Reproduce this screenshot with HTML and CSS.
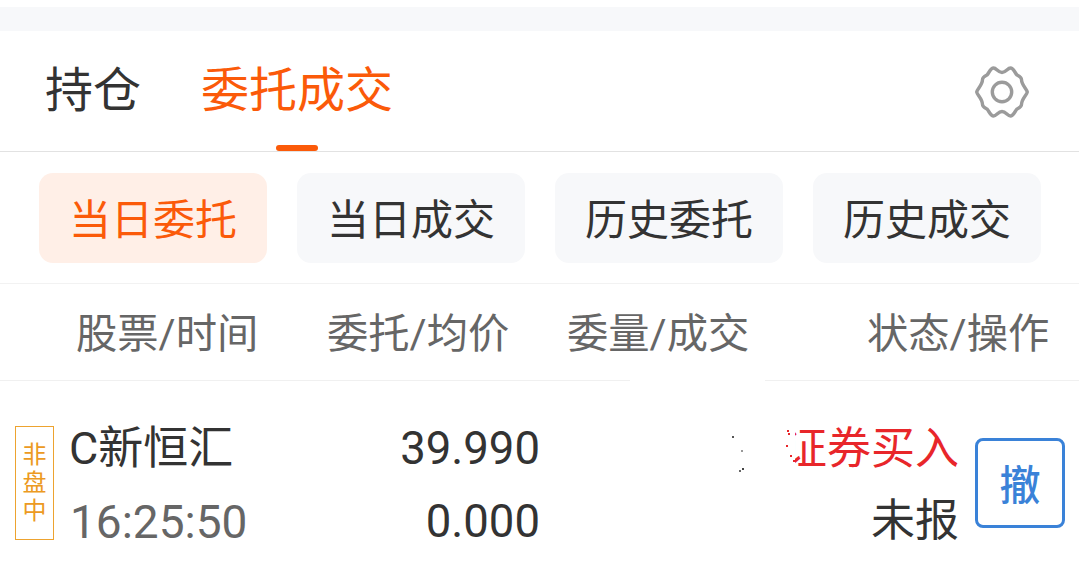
FILE: index.html
```html
<!DOCTYPE html>
<html lang="zh-CN">
<head>
<meta charset="utf-8">
<title>委托成交</title>
<link rel="stylesheet" href="styles.css">
</head>
<body>
<div class="band"></div>
<nav class="tabs">
  <span class="tab">持仓</span>
  <span class="tab tab-active">委托成交</span>
  <svg class="gear" viewBox="0 0 56 56" fill="none" stroke="#9b9b9b" stroke-width="3.4" stroke-linejoin="round">
    <path d="M53.300 28C52.800 25 47.500 21 47.500 15.500C47.500 13 45 12 43 11C41 9 39.500 4 36.500 4C33.500 4 32 8.500 28 8.500C24 8.500 22.500 4 19.500 4C16.500 4 15 9 13 11C11 12 8.500 13 8.500 15.500C8.500 21 3.200 25 2.700 28C3.200 31 8.500 35 8.500 40.500C8.500 43 11 44 13 45C15 47 16.500 52 19.500 52C22.500 52 24 47.500 28 47.500C32 47.500 33.500 52 36.500 52C39.500 52 41 47 43 45C45 44 47.500 43 47.500 40.500C47.500 35 52.800 31 53.300 28Z"/>
    <circle cx="28" cy="28" r="9.700"/>
  </svg>
</nav>
<div class="filters">
  <span class="chip chip-active">当日委托</span>
  <span class="chip">当日成交</span>
  <span class="chip">历史委托</span>
  <span class="chip">历史成交</span>
</div>
<div class="thead">
  <span>股票/时间</span>
  <span>委托/均价</span>
  <span>委量/成交</span>
  <span>状态/操作</span>
</div>
<div class="row">
  <div class="tag">非<br>盘<br>中</div>
  <div class="name">
    <div class="name-top">C新恒汇</div>
    <div class="name-time">16:25:50</div>
  </div>
  <div class="price">
    <div>39.990</div>
    <div>0.000</div>
  </div>
  <div class="status">
    <div class="status-top">证券买入<i class="erase"></i></div>
    <div class="status-bottom">未报</div>
  </div>
  <div class="cancel">撤</div>
  <i class="erase-line"></i>
  <i class="specks"></i>
</div>
</body>
</html>
```
FILE: styles.css
```css
* { box-sizing: border-box; }
html, body { margin: 0; padding: 0; background: #fff; }
body {
  width: 1079px;
  height: 575px;
  overflow: hidden;
  padding-top: 7px;
  font-family: Roboto, "Noto Sans CJK SC", sans-serif;
  color: #333;
}
.band { height: 24px; background: #f7f8fa; }
.tabs {
  position: relative;
  height: 121px;
  display: flex;
  align-items: center;
  padding: 0 49px 0 45px;
  border-bottom: 1px solid #e2e2e2;
  font-size: 48px;
}
.tab { line-height: 60px; margin-right: 60px; }
.tab-active { color: #fb5a09; position: relative; }
.tab-active::after {
  content: "";
  position: absolute;
  left: 75px;
  bottom: -30px;
  width: 42px;
  height: 6px;
  border-radius: 3px;
  background: #fb5a09;
}
.gear { width: 56px; height: 56px; margin-left: auto; margin-top: 2px; }
.filters {
  display: flex;
  gap: 30px;
  padding: 21px 0 20px 39px;
  border-bottom: 1px solid #f2f2f2;
}
.chip {
  width: 228px;
  height: 90px;
  display: flex;
  align-items: center;
  justify-content: center;
  padding-bottom: 3px;
  border-radius: 14px;
  background: #f7f8fa;
  font-size: 42px;
}
.chip-active { background: #ffefe7; color: #fb5a09; }
.thead {
  display: grid;
  grid-template-columns: 251px 240px 300px auto;
  padding: 0 0 5px 76px;
  height: 97px;
  align-items: center;
  border-bottom: 1px solid #f0f0f0;
  font-size: 41.300px;
  color: #666;
}
.row {
  position: relative;
  display: flex;
  align-items: flex-start;
  padding: 45px 14px 0 15px;
}
.tag {
  width: 39px;
  height: 114px;
  border: 1px solid #eda32f;
  color: #ec9a22;
  font-size: 24px;
  line-height: 28px;
  text-align: center;
  padding-top: 14px;
}
.name { margin-left: 16px; width: 300px; margin-top: -7px; }
.name-top { font-size: 45px; line-height: 60px; margin-left: -1px; }
.name-time { font-size: 46px; line-height: 60px; margin-top: 13px; color: #666; }
.price {
  width: 170px;
  margin-top: -7px;
  font-size: 45.500px;
  line-height: 60px;
  text-align: right;
}
.price div + div { margin-top: 13px; }
.status {
  margin-left: auto;
  margin-top: -7px;
  text-align: right;
  font-size: 44px;
  line-height: 60px;
}
.status-top { position: relative; color: #e8262a; }
.status-bottom { margin-top: 12px; }
.erase {
  position: absolute;
  left: -2px;
  top: 8px;
  width: 14px;
  height: 46px;
  background: #fff;
  box-shadow: -2px 0 0 #fff;
}
.erase-line {
  position: absolute;
  left: 630px;
  top: -1px;
  width: 135px;
  height: 1px;
  background: #fff;
}
.specks {
  position: absolute;
  left: 732px;
  top: 55px;
  width: 2px;
  height: 2px;
  background: #555;
  box-shadow:
    9px 14px 0 #999,
    10px 32px 0 #444,
    7px 34px 0 #666,
    55px -6px 0 #e8262a,
    56px -3px 0 #e8262a,
    54px 9px 0 #e8262a,
    58px 19px 0 #e8262a,
    61px 24px 0 #e8262a;
}
.cancel {
  width: 90px;
  height: 90px;
  margin-left: 16px;
  margin-top: 12px;
  padding-bottom: 2px;
  border: 3px solid #3a82d8;
  border-radius: 8px;
  color: #3a82d8;
  font-size: 41px;
  font-weight: 500;
  display: flex;
  align-items: center;
  justify-content: center;
}
```
